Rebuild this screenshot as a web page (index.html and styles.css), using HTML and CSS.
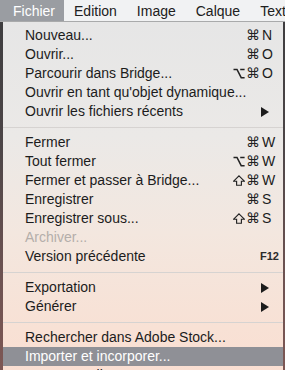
FILE: index.html
```html
<!DOCTYPE html>
<html lang="fr">
<head>
<meta charset="utf-8">
<link rel="stylesheet" href="styles.css">
</head>
<body>
<div class="menubar">
  <span class="mb-item first active">Fichier</span>
  <span class="mb-item">Edition</span>
  <span class="mb-item">Image</span>
  <span class="mb-item">Calque</span>
  <span class="mb-item">Texte</span>
</div>
<div class="menu">
  <div class="row"><span>Nouveau...</span><span class="sc"><span class="mods"><span class="m">⌘</span></span><span class="key">N</span></span></div>
  <div class="row"><span>Ouvrir...</span><span class="sc"><span class="mods"><span class="m">⌘</span></span><span class="key">O</span></span></div>
  <div class="row"><span>Parcourir dans Bridge...</span><span class="sc"><span class="mods"><span class="m"><svg class="ico" viewBox="0 0 12 11"><path d="M0.5 1.5 H4 L8.2 9.7 H11.6 M7.2 1.5 H11.6"/></svg></span><span class="m">⌘</span></span><span class="key">O</span></span></div>
  <div class="row"><span>Ouvrir en tant qu'objet dynamique...</span></div>
  <div class="row"><span>Ouvrir les fichiers récents</span><span class="sc"><span class="key"><span class="arrow"></span></span></span></div>
  <div class="sep"></div>
  <div class="row"><span>Fermer</span><span class="sc"><span class="mods"><span class="m">⌘</span></span><span class="key">W</span></span></div>
  <div class="row"><span>Tout fermer</span><span class="sc"><span class="mods"><span class="m"><svg class="ico" viewBox="0 0 12 11"><path d="M0.5 1.5 H4 L8.2 9.7 H11.6 M7.2 1.5 H11.6"/></svg></span><span class="m">⌘</span></span><span class="key">W</span></span></div>
  <div class="row"><span>Fermer et passer à Bridge...</span><span class="sc"><span class="mods"><span class="m"><svg class="ico shift" viewBox="0 0 12 11"><path d="M6 0.9 L11.3 6.2 H8.4 V10.2 H3.6 V6.2 H0.7 Z"/></svg></span><span class="m">⌘</span></span><span class="key">W</span></span></div>
  <div class="row"><span>Enregistrer</span><span class="sc"><span class="mods"><span class="m">⌘</span></span><span class="key">S</span></span></div>
  <div class="row"><span>Enregistrer sous...</span><span class="sc"><span class="mods"><span class="m"><svg class="ico shift" viewBox="0 0 12 11"><path d="M6 0.9 L11.3 6.2 H8.4 V10.2 H3.6 V6.2 H0.7 Z"/></svg></span><span class="m">⌘</span></span><span class="key">S</span></span></div>
  <div class="row disabled"><span>Archiver...</span></div>
  <div class="row"><span>Version précédente</span><span class="sc"><span class="fkey">F12</span></span></div>
  <div class="sep"></div>
  <div class="row"><span>Exportation</span><span class="sc"><span class="key"><span class="arrow"></span></span></span></div>
  <div class="row"><span>Générer</span><span class="sc"><span class="key"><span class="arrow"></span></span></span></div>
  <div class="sep"></div>
  <div class="row"><span>Rechercher dans Adobe Stock...</span></div>
  <div class="row selected"><span>Importer et incorporer...</span></div>
  <div class="row"><span>Importer et lier...</span></div>
</div>
</body>
</html>
```

FILE: styles.css
```css
html, body {
  margin: 0;
  padding: 0;
}
body {
  width: 285px;
  height: 370px;
  overflow: hidden;
  font-family: "Liberation Sans", Arial, sans-serif;
  font-size: 14px;
  color: #1c1c1c;
  background: linear-gradient(to bottom, #3c3c3e 0%, #4d4648 40%, #6e5352 75%, #7d5754 100%);
}
.menubar {
  display: flex;
  height: 21px;
  line-height: 22px;
  background: #f1f2f3;
  border-bottom: 1px solid #a9aaab;
  white-space: nowrap;
  overflow: hidden;
}
.mb-item {
  padding: 0 10px;
  color: #202020;
}
.mb-item.first {
  padding: 0 9px 0 13px;
}
.mb-item.active {
  background: #9a9da2;
  color: #ffffff;
}
.menu {
  margin: 0 2px 0 3px;
  padding-top: 4px;
  padding-bottom: 20px;
  background: linear-gradient(to bottom, #e6e6e6 0%, #ebe9e7 30%, #f3e7df 55%, #f8e1d5 80%, #fbddd0 100%);
}
.row {
  display: flex;
  justify-content: space-between;
  align-items: center;
  height: 19px;
  line-height: 19px;
  padding: 0 8px 0 22px;
  white-space: nowrap;
}
.row.disabled {
  color: #b4aeaa;
}
.row.selected {
  background: #8f9096;
  color: #ffffff;
}
.sep {
  height: 12px;
  display: flex;
  align-items: center;
}
.sep::before {
  content: "";
  display: block;
  width: 100%;
  height: 1px;
  background: #d6d3d1;
}
.sc {
  display: flex;
  align-items: center;
}
.mods {
  display: flex;
  align-items: center;
  margin-right: 2px;
  font-family: "DejaVu Sans", sans-serif;
  font-size: 14px;
  color: #222;
}
.m {
  display: inline-flex;
  justify-content: center;
  align-items: center;
  width: 14px;
  height: 19px;
}
.ico {
  width: 12px;
  height: 11px;
  fill: none;
  stroke: #222;
  stroke-width: 1.5;
  stroke-linejoin: miter;
}
.ico.shift {
  stroke-width: 1.15;
}
.key {
  display: inline-flex;
  align-items: center;
  width: 13px;
}
.arrow {
  display: block;
  width: 0;
  height: 0;
  margin-left: -1px;
  border-top: 5px solid transparent;
  border-bottom: 5px solid transparent;
  border-left: 8px solid #1c1c1c;
}
.fkey {
  font-size: 11px;
  font-weight: bold;
  margin-right: -4px;
  color: #2a2a2a;
}
```
